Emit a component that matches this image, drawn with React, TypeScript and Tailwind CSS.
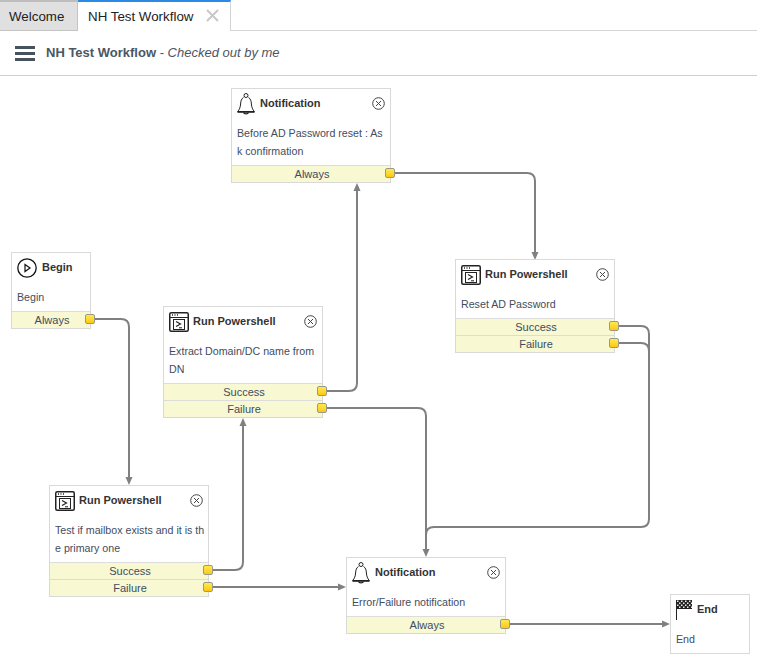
import React from 'react';

type NodeProps = {
  kind: 'bell' | 'shell' | 'play' | 'flag';
  title: string;
  text: string;
  x: number;
  y: number;
  w?: number;
  outs?: string[];
  closable?: boolean;
};

const BellIcon = () => (
  <svg width="18" height="22" viewBox="0 0 18 22" fill="none" stroke="#222" strokeWidth="1">
    <circle cx="9" cy="2.500" r="2" />
    <path d="M6.500 4.500C4.300 5.800 3.800 8 3.600 11C3.400 14 2.500 16.500 0.700 18.500H17.300C15.500 16.500 14.600 14 14.400 11C14.200 8 13.700 5.800 11.500 4.500" />
    <path d="M0.700 18.500V19.300H17.300V18.500" />
    <path d="M6.500 19.500C7 21.300 11 21.300 11.500 19.500" strokeWidth="1.200" />
  </svg>
);

const ShellIcon = () => (
  <svg width="20" height="20" viewBox="0 0 20 20" fill="none" stroke="#222">
    <rect x="0.750" y="0.750" width="18.500" height="18.500" rx="1.500" strokeWidth="1.500" />
    <path d="M1 5.500H19" strokeWidth="1" />
    <path d="M3 3H4M5.500 3H6.500M8 3H9" strokeWidth="1.500" />
    <rect x="4.500" y="7.500" width="11" height="10" strokeWidth="1" />
    <path d="M7 9.500L11.500 12L7 14.500" strokeWidth="1.200" />
    <path d="M10 15.800H13" strokeWidth="1" />
  </svg>
);

const PlayIcon = () => (
  <svg width="20" height="20" viewBox="0 0 20 20" fill="none" stroke="#111">
    <circle cx="10" cy="10" r="9.200" strokeWidth="1.300" />
    <path d="M8 6.500L13 10L8 13.500Z" strokeWidth="1.200" />
  </svg>
);

const FlagIcon = () => (
  <svg width="16" height="20" viewBox="0 0 16 20" fill="none">
    <path d="M0.500 0V20" stroke="#222" strokeWidth="1" />
    <rect x="0.500" y="0" width="15.500" height="9" fill="#222" />
    {[0, 1, 2, 3].map(r =>
      [0, 1, 2, 3, 4, 5, 6, 7].map(c =>
        (r + c) % 2 === 0 ? <rect key={`${r}-${c}`} x={1 + c * 2} y={0.500 + r * 2} width="1.500" height="1.500" fill="#eee" /> : null
      )
    )}
  </svg>
);

const CloseIcon = () => (
  <svg width="13" height="13" viewBox="0 0 13 13" fill="none" stroke="#444" strokeWidth="1">
    <circle cx="6.500" cy="6.500" r="5.800" />
    <path d="M4 4L9 9M9 4L4 9" />
  </svg>
);

const icons = {
  bell: { Icon: BellIcon, gap: 'ml-[5px]' },
  shell: { Icon: ShellIcon, gap: 'ml-[4px]' },
  play: { Icon: PlayIcon, gap: 'ml-[5px]' },
  flag: { Icon: FlagIcon, gap: 'ml-[5px]' },
};

const FlowNode = ({ kind, title, text, x, y, w = 160, outs = [], closable = true }: NodeProps) => {
  const { Icon, gap } = icons[kind];
  return (
    <div className="absolute bg-white border border-[#d9d9d9] box-border" style={{ left: x, top: y, width: w }}>
      <div className="relative h-[30px] flex items-center pl-[5px]">
        <Icon />
        <span className={`${gap} mt-[-1px] text-[11px] font-bold text-[#333]`}>{title}</span>
        {closable && (
          <div className="absolute right-[5px] top-[8px] flex">
            <CloseIcon />
          </div>
        )}
      </div>
      <div className="pl-[5px] pr-[3px] pt-[5px] pb-[5px] text-[10.670px] leading-[18px] text-[#3f4d60] break-all">{text}</div>
      {outs.map(o => (
        <div key={o} className="relative h-[17px] box-border border-t border-[#dcdcdc] bg-[#f8f8d2] pl-[2px] text-center text-[11px] leading-[17px] text-[#3f4d60]">
          {o}
          <span className="absolute right-[-5px] top-[2px] w-[10px] h-[10px] rounded-[2px] border border-[#999988] bg-linear-to-b from-[#ffe94d] to-[#ffc800]" />
        </div>
      ))}
    </div>
  );
};

const edges = [
  'M95 319H121Q129 319 129 327V480',
  'M213 570H235Q243 570 243 562V423',
  'M213 587H341',
  'M327 391H349Q357 391 357 383V188',
  'M327 408H418Q426 408 426 416V552',
  'M395 173H527Q535 173 535 181V255',
  'M618 326H641Q649 326 649 334V519Q649 527 641 527H434Q426 527 426 535',
  'M618 343H641Q649 343 649 351V500',
  'M510 624H665',
];

const arrows = [
  '129,485 125.500,477 132.500,477',
  '243,418 239.500,426 246.500,426',
  '346,587 338,583.500 338,590.500',
  '357,183 353.500,191 360.500,191',
  '426,557 422.500,549 429.500,549',
  '535,260 531.500,252 538.500,252',
  '670,624 662,620.500 662,627.500',
];

const App: React.FC = () => {
  return (
    <div className="relative w-[757px] h-[663px] bg-white overflow-hidden font-['Liberation_Sans',Arial,sans-serif]">
      {/* tabs */}
      <div className="flex h-[31px] border-b border-[#d4d4d4]">
        <div className="w-[78px] h-[31px] box-border border-t-2 border-[#bdbdbd] border-r border-b border-r-[#c4c4c4] border-b-[#c4c4c4] bg-[#e0e0e0] pl-[9px] text-[13.330px] leading-[29px] text-[#222]">
          Welcome
        </div>
        <div className="w-[153px] h-[31px] box-border border-t-2 border-[#2a8ae6] border-r border-r-[#d4d4d4] bg-white pl-[10px] flex items-center gap-[13px] text-[13.330px] text-[#222]">
          <span>NH Test Workflow</span>
          <svg width="13" height="13" viewBox="0 0 13 13" stroke="#c8c8c8" strokeWidth="2" className="mt-[-2px]">
            <path d="M1 1L12 12M12 1L1 12" />
          </svg>
        </div>
      </div>
      {/* toolbar */}
      <div className="flex items-center h-[45px] border-b border-[#cfcfcf] pl-[15px]">
        <div className="flex flex-col gap-[3px] mt-[1px]">
          <div className="w-[20px] h-[3px] bg-[#47525f]" />
          <div className="w-[20px] h-[3px] bg-[#47525f]" />
          <div className="w-[20px] h-[3px] bg-[#47525f]" />
        </div>
        <div className="ml-[11px] mt-[-1px] text-[13px] text-[#4c5663]">
          <span className="font-bold">NH Test Workflow</span> - <span className="italic">Checked out by me</span>
        </div>
      </div>
      {/* canvas */}
      <svg className="absolute left-0 top-0" width="757" height="663" fill="none">
        {edges.map(d => (
          <path key={d} d={d} stroke="#808080" strokeWidth="2" />
        ))}
        {arrows.map(p => (
          <polygon key={p} points={p} fill="#808080" />
        ))}
      </svg>
      <FlowNode kind="bell" title="Notification" text="Before AD Password reset : Ask confirmation" x={231} y={88} outs={['Always']} />
      <FlowNode kind="shell" title="Run Powershell" text="Reset AD Password" x={455} y={259} outs={['Success', 'Failure']} />
      <FlowNode kind="play" title="Begin" text="Begin" x={11} y={252} w={80} outs={['Always']} closable={false} />
      <FlowNode kind="shell" title="Run Powershell" text="Extract Domain/DC name from DN" x={163} y={306} outs={['Success', 'Failure']} />
      <FlowNode kind="shell" title="Run Powershell" text="Test if mailbox exists and it is the primary one" x={49} y={485} outs={['Success', 'Failure']} />
      <FlowNode kind="bell" title="Notification" text="Error/Failure notification" x={346} y={557} outs={['Always']} />
      <FlowNode kind="flag" title="End" text="End" x={670} y={594} w={80} closable={false} />
    </div>
  );
};

export default App;
